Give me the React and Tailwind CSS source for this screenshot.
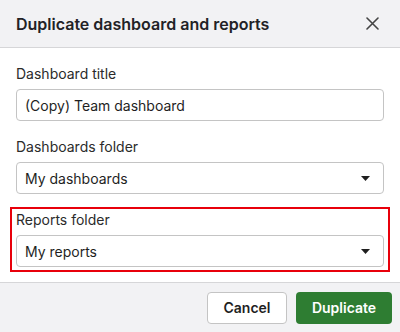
import React from "react";

const Caret = () => (
  <svg width="9" height="5" viewBox="0 0 9 5" className="shrink-0">
    <path d="M0 0h9L4.5 5z" fill="#1f1f1f" />
  </svg>
);

const Field = ({ label, children }) => (
  <div>
    <label className="block h-5 text-[14px] leading-5 text-[#2b2b2b]">{label}</label>
    <div className="mt-[5px]">{children}</div>
  </div>
);

const SelectBox = ({ value }) => (
  <div className="flex h-8 items-center justify-between rounded border border-[#c4c4c4] bg-white pl-2 pr-[13px] text-[14px] text-[#1f1f1f]">
    <span>{value}</span>
    <Caret />
  </div>
);

export default function App() {
  return (
    <div className="flex h-[332px] w-[400px] flex-col bg-white font-['Inter',sans-serif]">
      {/* Header */}
      <div className="flex h-12 items-center justify-between border-b border-[#d6d6d8] bg-[#f2f2f4] pl-4 pr-[21px]">
        <h1 className="text-[16px] font-semibold text-[#222226]">Duplicate dashboard and reports</h1>
        <svg width="13" height="13" viewBox="0 0 13 13">
          <path d="M1 1l11 11M12 1L1 12" stroke="#444" strokeWidth="1.6" strokeLinecap="round" />
        </svg>
      </div>

      {/* Body */}
      <div className="flex-1 px-4 pt-4">
        <Field label="Dashboard title">
          <input
            defaultValue="(Copy) Team dashboard"
            className="h-8 w-full rounded border border-[#c4c4c4] px-2 text-[14px] text-[#1f1f1f] outline-none"
          />
        </Field>
        <div className="mt-4">
          <Field label="Dashboards folder">
            <SelectBox value="My dashboards" />
          </Field>
        </div>
        <div className="-mx-[6px] mt-[13px] border-2 border-[#e8000b] px-1 pt-[1px] pb-[3px]">
          <Field label="Reports folder">
            <SelectBox value="My reports" />
          </Field>
        </div>
      </div>

      {/* Footer */}
      <div className="flex h-[50px] items-center justify-end gap-[9px] border-t border-[#d6d6d8] bg-[#f2f2f4] px-2">
        <button className="h-8 w-20 rounded border border-[#c4c4c4] bg-white text-[14px] font-semibold text-[#1f1f1f]">
          Cancel
        </button>
        <button className="h-8 w-24 rounded bg-[#2e7d32] text-[14px] font-semibold text-white">
          Duplicate
        </button>
      </div>
    </div>
  );
}
